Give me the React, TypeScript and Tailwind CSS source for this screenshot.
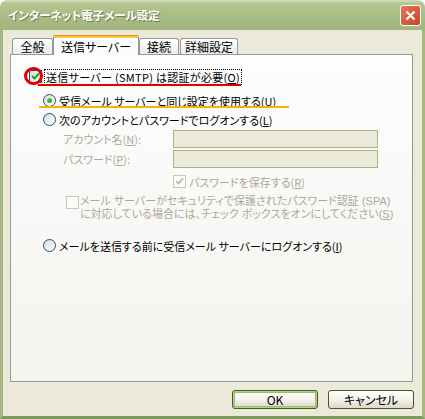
import React from 'react';

// XP風のチェックボックス
const CheckBox = ({ checked, disabled }: { checked?: boolean; disabled?: boolean }) => (
  <span
    className={
      'flex h-[13px] w-[13px] shrink-0 items-center justify-center border ' +
      (disabled
        ? 'border-[#CAC8BB] bg-[#FCFCFB]'
        : 'border-[#1C5180] bg-gradient-to-br from-[#DCDCD7] to-[#FFFFFF]')
    }
  >
    {checked && (
      <svg width="9" height="9" viewBox="0 0 9 9">
        <polyline
          points="1,4 3.5,6.5 8,1.5"
          fill="none"
          stroke={disabled ? '#C4C1B3' : '#21A121'}
          strokeWidth="2"
        />
      </svg>
    )}
  </span>
);

// XP風のラジオボタン
const Radio = ({ checked }: { checked?: boolean }) => (
  <span className="flex h-[13px] w-[13px] shrink-0 items-center justify-center rounded-full border border-[#1C5180] bg-gradient-to-br from-[#DCDCD7] to-[#FFFFFF]">
    {checked && (
      <span className="h-[5px] w-[5px] rounded-full bg-gradient-to-br from-[#55D655] to-[#1E9A1E]" />
    )}
  </span>
);

const Tab = ({ label, width, active }: { label: string; width: string; active?: boolean }) =>
  active ? (
    <div
      className={
        'relative z-10 -mb-px flex h-[20px] flex-col rounded-t-[3px] border-x border-[#919B9C] bg-[#FCFCFE] ' + width
      }
    >
      <div className="h-px rounded-t-[3px] bg-[#E68B2C]" />
      <div className="h-[2px] bg-[#FFC73C]" />
      <div className="flex flex-1 items-center justify-center text-[12px] leading-[14px]">{label}</div>
    </div>
  ) : (
    <div
      className={
        'flex h-[16px] items-center justify-center rounded-t-[3px] border-x border-t border-[#919B9C] bg-gradient-to-b from-[#FFFFFF] to-[#ECEBE6] text-[12px] leading-[14px] ' +
        width
      }
    >
      {label}
    </div>
  );

const App = () => {
  return (
    <div className="flex h-[419px] w-[425px] flex-col font-['Noto_Sans_CJK_JP',sans-serif] text-black [font-feature-settings:'palt']">
      {/* タイトルバー */}
      <div className="flex h-[30px] shrink-0 items-center rounded-t-[7px] bg-[linear-gradient(to_bottom,#D8E0BF_0px,#B6C692_3px,#AABC86_50%,#A3B57E_100%)] pl-[8px] pr-[4px]">
        <span className="flex-1 text-[11.5px] font-bold leading-[16px] text-white [text-shadow:1px_1px_0_#6E7F50]">
          インターネット電子メール設定
        </span>
        <div className="flex h-[21px] w-[21px] items-center justify-center rounded-[3px] border border-white bg-gradient-to-br from-[#E47556] to-[#C7452A]">
          <svg width="11" height="11" viewBox="0 0 11 11">
            <path d="M1.5 1.5 L9.5 9.5 M9.5 1.5 L1.5 9.5" stroke="#FFFFFF" strokeWidth="2.2" />
          </svg>
        </div>
      </div>

      {/* 本体 */}
      <div className="flex flex-1 flex-col border-x-[3px] border-b-[3px] border-x-[#A5B883] border-b-[#7C9A5C] bg-[#ECE9D8]">
        <div className="ml-[7px] mt-[5px] flex w-[403px] flex-col">
          {/* タブ */}
          <div className="flex h-[19px] items-end pl-[2px]">
            <Tab label="全般" width="w-[41px]" />
            <Tab label="送信サーバー" width="w-[86px]" active />
            <Tab label="接続" width="w-[40px]" />
            <div className="w-px" />
            <Tab label="詳細設定" width="w-[58px]" />
          </div>

          {/* タブパネル */}
          <div className="relative flex h-[328px] flex-col whitespace-nowrap border border-[#919B9C] bg-gradient-to-b from-[#FDFDFE] to-[#F4F3EE] text-[11px] leading-[14px]">
            <div className="ml-[18px] mt-[13px] flex h-[17px] items-center">
              <CheckBox checked />
              <span className="ml-[2px] border border-dotted border-black px-px tracking-[0.3px]">
                送信サーバー (SMTP) は認証が必要(<span className="underline">O</span>)
              </span>
            </div>

            <div className="ml-[32px] mt-[7px] flex h-[17px] items-center">
              <Radio checked />
              <span className="ml-[3px]">
                受信メール サーバーと同じ設定を使用する(<span className="underline">U</span>)
              </span>
            </div>

            <div className="ml-[32px] mt-[2px] flex h-[17px] items-center">
              <Radio />
              <span className="ml-[3px]">
                次のアカウントとパスワードでログオンする(<span className="underline">L</span>)
              </span>
            </div>

            <div className="ml-[52px] mt-[2px] flex h-[18px] items-center text-[#ACA899]">
              <span className="w-[110px]">
                アカウント名(<span className="underline">N</span>):
              </span>
              <div className="h-[18px] w-[205px] border border-[#A4B97F] bg-[#ECE9D8]" />
            </div>

            <div className="ml-[52px] mt-[2px] flex h-[18px] items-center text-[#ACA899]">
              <span className="w-[110px]">
                パスワード(<span className="underline">P</span>):
              </span>
              <div className="h-[18px] w-[205px] border border-[#A4B97F] bg-[#ECE9D8]" />
            </div>

            <div className="ml-[162px] mt-[5px] flex h-[17px] items-center text-[#ACA899]">
              <CheckBox checked disabled />
              <span className="ml-[3px]">
                パスワードを保存する(<span className="underline">R</span>)
              </span>
            </div>

            <div className="ml-[55px] mt-[5px] flex items-start text-[#ACA899]">
              <div className="mt-px">
                <CheckBox disabled />
              </div>
              <span className="ml-[1px] font-['Liberation_Sans','Noto_Sans_CJK_JP',sans-serif] leading-[12.5px]">
                メール サーバーがセキュリティで保護されたパスワード認証 (SPA)
                <br />
                に対応している場合には、チェック ボックスをオンにしてください(<span className="underline">S</span>)
              </span>
            </div>

            <div className="ml-[32px] mt-[17px] flex h-[17px] items-center">
              <Radio />
              <span className="ml-[3px]">
                メールを送信する前に受信メール サーバーにログオンする(<span className="underline">I</span>)
              </span>
            </div>

            {/* 注釈 (赤丸・下線) */}
            <div className="absolute left-[13px] top-[12px] h-[18px] w-[19px] rounded-full border-[3px] border-[#E50000]" />
            <div className="absolute left-[27px] top-[29px] h-[2px] w-[203px] bg-[#E50000]" />
            <div className="absolute left-[28px] top-[51px] h-[2px] w-[250px] bg-[#F5B400]" />
          </div>
        </div>

        {/* ボタン */}
        <div className="mr-[8px] mt-[8px] flex justify-end gap-[10px]">
          <button className="flex h-[19px] w-[86px] items-center justify-center rounded-[3px] border border-[#3E5A26] bg-gradient-to-b from-[#FFFFFF] via-[#F3F2EC] to-[#DCD8CB] text-[12px] leading-[14px] shadow-[inset_0_0_0_1px_#B8D08A,inset_0_0_0_2px_#9DBB6A]">
            OK
          </button>
          <button className="flex h-[19px] w-[86px] items-center justify-center rounded-[3px] border border-[#3E5A26] bg-gradient-to-b from-[#FFFFFF] via-[#F3F2EC] to-[#DCD8CB] text-[12px] leading-[14px]">
            キャンセル
          </button>
        </div>
      </div>
    </div>
  );
};

export default App;
